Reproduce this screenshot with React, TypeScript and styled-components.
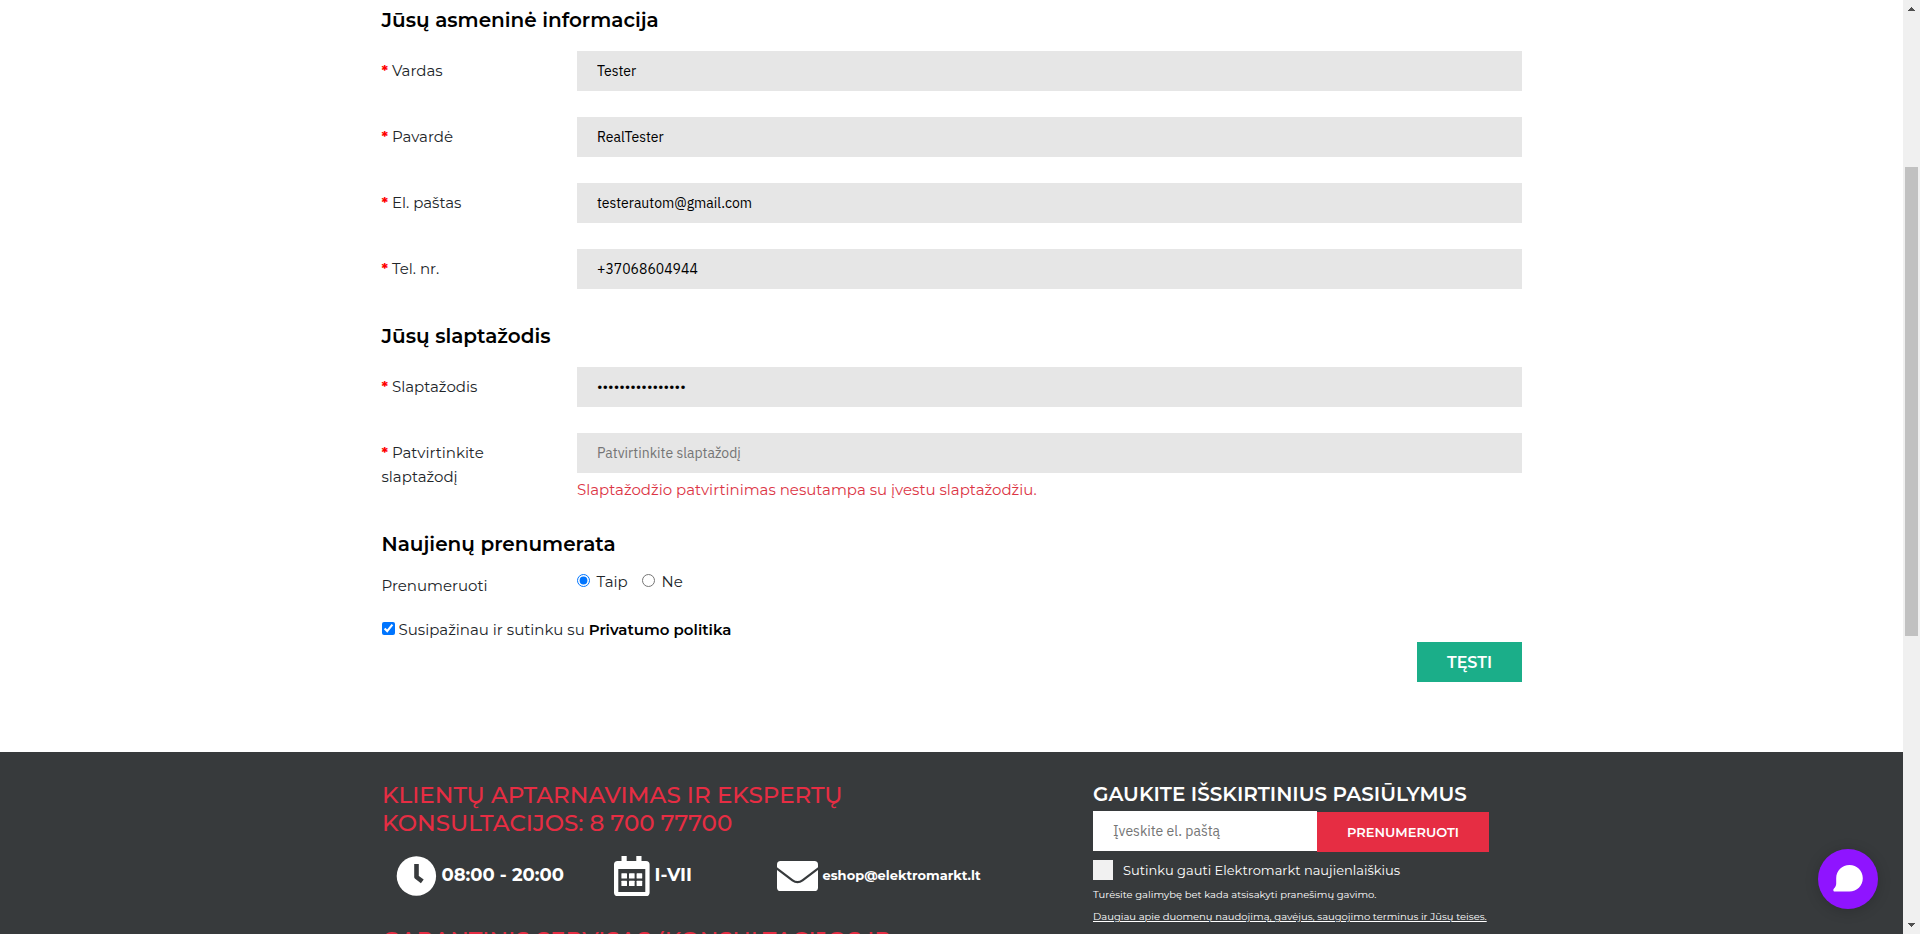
import React from "react";
import styled, { createGlobalStyle } from "styled-components";

const GlobalStyle = createGlobalStyle`
  *, *::before, *::after { box-sizing: border-box; }
  html, body { margin: 0; overflow: hidden; }
  body { background: #fff; color: #000; font-family: Montserrat, Inter, sans-serif; }
  h2, h3, p { margin: 0; }
`;

const Screen = styled.div`
  display: flex;
  width: 1920px;
  height: 934px;
  overflow: hidden;
`;

const Page = styled.div`
  flex: 1;
  height: 934px;
  overflow: hidden;
  display: flex;
  flex-direction: column;
`;

/* ---------- Form ---------- */

const Form = styled.form`
  width: 1140px;
  height: 752px;
  flex: none;
  margin-left: 382px;
  padding-top: 8px;
`;

const Section = styled.section<{ $gap?: number }>`
  margin-top: ${(p) => p.$gap ?? 0}px;
`;

const SectionTitle = styled.h2`
  font-size: 20px;
  font-weight: 600;
  line-height: 24px;
  margin-left: -0.5px;
`;

const Fields = styled.div`
  display: flex;
  flex-direction: column;
  gap: 26px;
  margin-top: 19px;
`;

const FieldRow = styled.div`
  display: grid;
  grid-template-columns: 195px 945px;
  align-items: start;
  min-height: 40px;
`;

const Label = styled.div`
  padding-top: 8px;
  margin-left: -0.5px;
  font-size: 15px;
  line-height: 24px;
  color: #212529;
`;

const Star = styled.span`
  color: #f00;
  font-weight: 700;
`;

const Input = styled.input`
  display: block;
  width: 100%;
  height: 40px;
  padding: 0 20px;
  border: 0;
  border-radius: 0;
  outline: 0;
  background: #e6e6e6;
  color: #000;
  font: 400 14px/20px "IBM Plex Sans", Roboto, sans-serif;
  &::placeholder { color: #757575; opacity: 1; }
`;

const ErrorText = styled.p`
  margin-top: 5px;
  height: 24px;
  font-size: 15px;
  line-height: 24px;
  color: #dc3545;
`;

const ChoiceRow = styled.div`
  display: grid;
  grid-template-columns: 195px 1fr;
  height: 48px;
  padding-top: 14px;
  font-size: 15px;
  line-height: 24px;
  color: #212529;
`;

const ChoiceLabel = styled.span`
  margin: 4px 0 0 -0.5px;
`;

const Radios = styled.div`
  display: flex;
`;

const RadioOption = styled.label`
  display: flex;
  width: 65px;
`;

const Radio = styled.input`
  width: 13px;
  height: 13px;
  margin: 4px 6.5px 0 0;
`;

const Consent = styled.label`
  display: flex;
  margin-top: 14px;
  height: 24px;
  font-size: 15px;
  line-height: 24px;
  color: #212529;
`;

const ConsentBox = styled.input`
  width: 13px;
  height: 13px;
  margin: 4px 3.5px 0 0;
`;

const ConsentLink = styled.b`
  margin-left: 4px;
  font-weight: 600;
  color: #000;
`;

const Actions = styled.div`
  display: flex;
  justify-content: flex-end;
`;

const Button = styled.button<{ $color: string; $width: number; $size: number; $drop?: number }>`
  width: ${(p) => p.$width}px;
  height: 40px;
  padding: ${(p) => p.$drop ?? 0}px 0 0;
  border: 0;
  background: ${(p) => p.$color};
  color: #fff;
  font: 600 ${(p) => p.$size}px/20px Montserrat, Inter, sans-serif;
`;

/* ---------- Footer ---------- */

const Footer = styled.footer`
  flex: 1;
  display: flex;
  padding: 29px 0 0 382px;
  background: #373a3c;
  color: #fff;
  overflow: hidden;
`;

const Support = styled.div`
  width: 711px;
  flex: none;
`;

const SupportTitle = styled.h3`
  font-size: 23px;
  font-weight: 500;
  line-height: 28px;
  color: #e62d43;
`;

const Line = styled.span`
  display: block;
  white-space: nowrap;
`;

const Contacts = styled.div`
  display: flex;
  height: 40px;
  margin: 19px 0 30px 14px;
`;

const Contact = styled.div<{ $width: number; $size: number }>`
  display: flex;
  gap: 4.5px;
  width: ${(p) => p.$width}px;
  font-size: ${(p) => p.$size}px;
  font-weight: 700;
  line-height: 38px;
  white-space: nowrap;
  svg { flex: none; }
`;

const Newsletter = styled.div`
  width: 400px;
  padding-top: 1px;
`;

const NewsTitle = styled.h3`
  font-size: 20px;
  font-weight: 600;
  line-height: 24px;
  white-space: nowrap;
`;

const Subscribe = styled.div`
  display: flex;
  align-items: flex-end;
  height: 41px;
  margin-top: 5px;
`;

const EmailInput = styled(Input)`
  width: 224px;
  margin-bottom: 1px;
  background: #fff;
`;

const Agree = styled.label`
  display: flex;
  gap: 10px;
  margin-top: 8px;
  font-size: 13px;
  line-height: 20px;
`;

const AgreeBox = styled.span`
  width: 20px;
  height: 20px;
  background: #f1f1f1;
`;

const Fine = styled.p<{ $top: number; $link?: boolean }>`
  margin-top: ${(p) => p.$top}px;
  font-size: 10px;
  line-height: 16px;
  white-space: nowrap;
  text-decoration: ${(p) => (p.$link ? "underline" : "none")};
`;

/* ---------- Overlay and scrollbar ---------- */

const ChatButton = styled.div`
  position: fixed;
  left: 1818px;
  top: 849px;
  width: 60px;
  height: 60px;
  border-radius: 50%;
  background: #8f14ff;
  box-shadow: 0 2px 14px rgba(0, 0, 0, 0.18);
`;

const Scrollbar = styled.div`
  width: 17px;
  height: 934px;
  padding: 7px 2px;
  display: flex;
  flex-direction: column;
  background: #f0f0f0;
`;

const Thumb = styled.div`
  width: 13px;
  height: 469px;
  margin: 156px 0 auto;
  background: #c1c1c1;
`;

const Arrow = styled.svg`
  display: block;
  margin-left: 3px;
`;

type FieldProps = {
  label: string;
  value?: string;
  type?: string;
  placeholder?: string;
  error?: string;
};

function Field({ label, value, type = "text", placeholder, error }: FieldProps) {
  return (
    <FieldRow>
      <Label>
        <Star>*</Star>{" "}
        {label.split("\n").map((part, i) => (
          <React.Fragment key={part}>
            {i > 0 && <br />}
            {part}
          </React.Fragment>
        ))}
      </Label>
      <div>
        <Input type={type} defaultValue={value} placeholder={placeholder} />
        {error && <ErrorText>{error}</ErrorText>}
      </div>
    </FieldRow>
  );
}

const ClockIcon = () => (
  <svg width="41" height="40" viewBox="0 0 41 40">
    <circle cx="20.4" cy="20" r="19.7" fill="#fff" />
    <path d="M20.5 8v13l5.8 4.4" fill="none" stroke="#373a3c" strokeWidth="4.6" strokeLinejoin="round" />
  </svg>
);

const CalendarIcon = () => (
  <svg width="36" height="40" viewBox="0 0 36 40">
    <path
      fill="#fff"
      fillRule="evenodd"
      d="M7.5 0h5.2v5h9.6V0h5.2v5H32a3.6 3.6 0 0 1 3.6 3.6v27.8A3.6 3.6 0 0 1 32 40H3.6A3.6 3.6 0 0 1 0 36.4V8.6A3.6 3.6 0 0 1 3.6 5H7.5zM4.3 13v23h27V13z"
    />
    {[17.2, 24.8].map((y) =>
      [7.4, 15, 22.6].map((x) => <rect key={`${x}-${y}`} x={x} y={y} width="5.6" height="5.3" rx="0.5" fill="#fff" />)
    )}
  </svg>
);

const MailIcon = () => (
  <svg width="41" height="40" viewBox="0 0 41 40">
    <rect y="5" width="41" height="30" rx="3.6" fill="#fff" />
    <path d="M-1 12l16.5 12.3q5 3.6 10 0L42 12" fill="none" stroke="#373a3c" strokeWidth="2.2" />
  </svg>
);

export default function App() {
  return (
    <Screen>
      <GlobalStyle />
      <Page>
        <Form>
          <Section>
            <SectionTitle>Jūsų asmeninė informacija</SectionTitle>
            <Fields>
              <Field label="Vardas" value="Tester" />
              <Field label="Pavardė" value="RealTester" />
              <Field label="El. paštas" value="testerautom@gmail.com" />
              <Field label="Tel. nr." value="+37068604944" />
            </Fields>
          </Section>
          <Section $gap={35}>
            <SectionTitle>Jūsų slaptažodis</SectionTitle>
            <Fields>
              <Field label="Slaptažodis" type="password" value="testertester1234" />
              <Field
                label={"Patvirtinkite\nslaptažodį"}
                type="password"
                placeholder="Patvirtinkite slaptažodį"
                error="Slaptažodžio patvirtinimas nesutampa su įvestu slaptažodžiu."
              />
            </Fields>
          </Section>
          <Section $gap={30}>
            <SectionTitle>Naujienų prenumerata</SectionTitle>
            <ChoiceRow>
              <ChoiceLabel>Prenumeruoti</ChoiceLabel>
              <Radios>
                <RadioOption>
                  <Radio type="radio" name="newsletter" defaultChecked />
                  Taip
                </RadioOption>
                <RadioOption>
                  <Radio type="radio" name="newsletter" />
                  Ne
                </RadioOption>
              </Radios>
            </ChoiceRow>
            <Consent>
              <ConsentBox type="checkbox" defaultChecked />
              <span>Susipažinau ir sutinku su</span>
              <ConsentLink>Privatumo politika</ConsentLink>
            </Consent>
            <Actions>
              <Button type="button" $color="#1bae89" $width={105} $size={16} $drop={2}>
                TĘSTI
              </Button>
            </Actions>
          </Section>
        </Form>

        <Footer>
          <Support>
            <SupportTitle>
              <Line>KLIENTŲ APTARNAVIMAS IR EKSPERTŲ</Line>
              <Line>KONSULTACIJOS: 8 700 77700</Line>
            </SupportTitle>
            <Contacts>
              <Contact $width={218} $size={18}>
                <ClockIcon />
                08:00 - 20:00
              </Contact>
              <Contact $width={163} $size={18}>
                <CalendarIcon />
                I-VII
              </Contact>
              <Contact $width={220} $size={13}>
                <MailIcon />
                eshop@elektromarkt.lt
              </Contact>
            </Contacts>
            <SupportTitle>
              <Line>GARANTINIS SERVISAS (KONSULTACIJOS IR</Line>
            </SupportTitle>
          </Support>
          <Newsletter>
            <NewsTitle>GAUKITE IŠSKIRTINIUS PASIŪLYMUS</NewsTitle>
            <Subscribe>
              <EmailInput placeholder="Įveskite el. paštą" />
              <Button type="button" $color="#e62d43" $width={172} $size={13}>
                PRENUMERUOTI
              </Button>
            </Subscribe>
            <Agree>
              <AgreeBox />
              Sutinku gauti Elektromarkt naujienlaiškius
            </Agree>
            <Fine $top={7}>Turėsite galimybę bet kada atsisakyti pranešimų gavimo.</Fine>
            <Fine $top={6} $link>
              Daugiau apie duomenų naudojimą, gavėjus, saugojimo terminus ir Jūsų teises.
            </Fine>
          </Newsletter>
        </Footer>
      </Page>

      <Scrollbar>
        <Arrow width="7" height="4" viewBox="0 0 7 4" shapeRendering="crispEdges">
          <path d="M0 4V3h1V2h1V1h1V0h1v1h1v1h1v1h1v1z" fill="#505050" />
        </Arrow>
        <Thumb />
        <Arrow width="7" height="4" viewBox="0 0 7 4" shapeRendering="crispEdges">
          <path d="M0 0v1h1v1h1v1h1v1h1V3h1V2h1V1h1V0z" fill="#505050" />
        </Arrow>
      </Scrollbar>

      <ChatButton>
        <svg width="60" height="60" viewBox="0 0 60 60">
          <path
            fill="#fff"
            d="M31.5 16C38.9 16 44.8 21.9 44.8 29.3S38.9 42.6 31.5 42.6H17.1C15.2 42.6 14.7 40.7 16 39.4C17.3 38.2 18.2 37 18.2 34.6V29.3C18.2 21.9 24.1 16 31.5 16Z"
          />
        </svg>
      </ChatButton>
    </Screen>
  );
}
